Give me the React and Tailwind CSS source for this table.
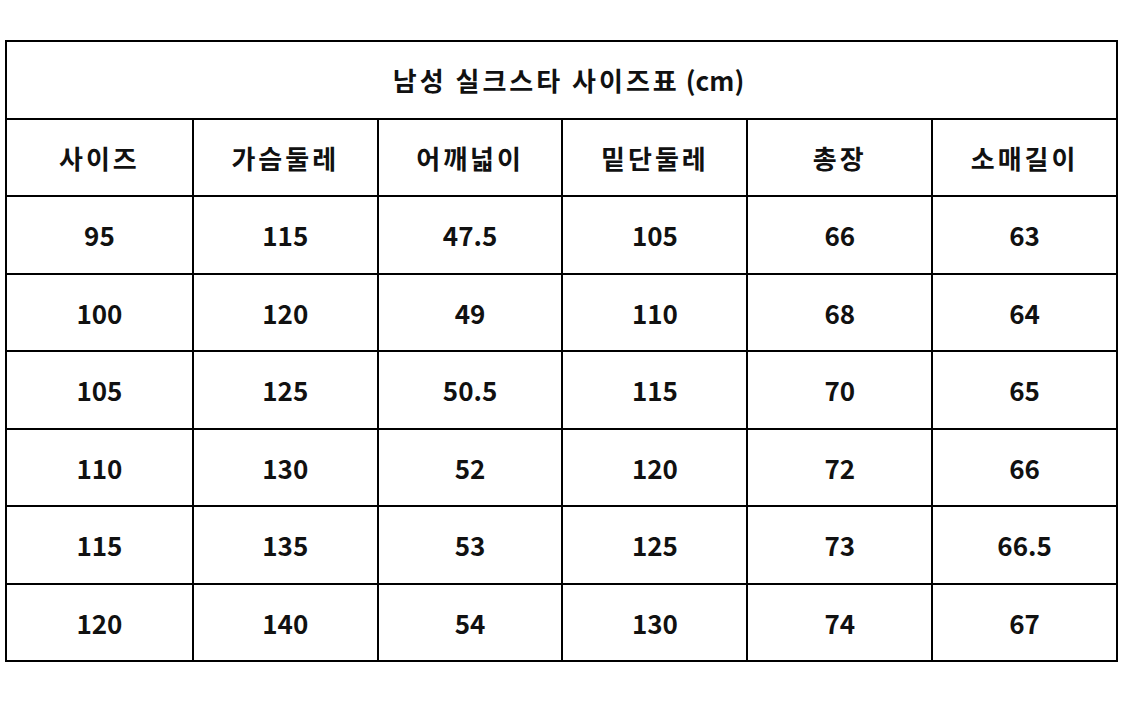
import React from "react";

const headers = ["사이즈", "가슴둘레", "어깨넓이", "밑단둘레", "총장", "소매길이"];

const rows = [
  ["95", "115", "47.5", "105", "66", "63"],
  ["100", "120", "49", "110", "68", "64"],
  ["105", "125", "50.5", "115", "70", "65"],
  ["110", "130", "52", "120", "72", "66"],
  ["115", "135", "53", "125", "73", "66.5"],
  ["120", "140", "54", "130", "74", "67"],
];

const Row = ({ cells, extra = "" }) => (
  <div className={"grid grid-cols-6 h-[77.5px] border-t-2 border-black " + extra}>
    {cells.map((c, i) => (
      <div
        key={i}
        className={
          "flex items-center justify-center " + (i > 0 ? "border-l-2 border-black" : "")
        }
      >
        {c}
      </div>
    ))}
  </div>
);

export default function App() {
  return (
    <div
      className="w-[1125px] h-[706px] bg-white pt-[40px] pl-[5px] text-[#111] font-bold text-[26px]"
      style={{ fontFamily: '"Noto Sans CJK KR", "Noto Sans", sans-serif' }}
    >
      <div className="w-[1113px] border-2 border-black flex flex-col">
        <div className="h-[75.5px] flex items-center justify-center pl-[14px]">
          <span className="tracking-[3px]">남성 실크스타 사이즈표 </span>
          <span className="ml-[6px]">(cm)</span>
        </div>
        <Row cells={headers} extra="tracking-[3px]" />
        {rows.map((r, i) => (
          <Row key={i} cells={r} />
        ))}
      </div>
    </div>
  );
}
